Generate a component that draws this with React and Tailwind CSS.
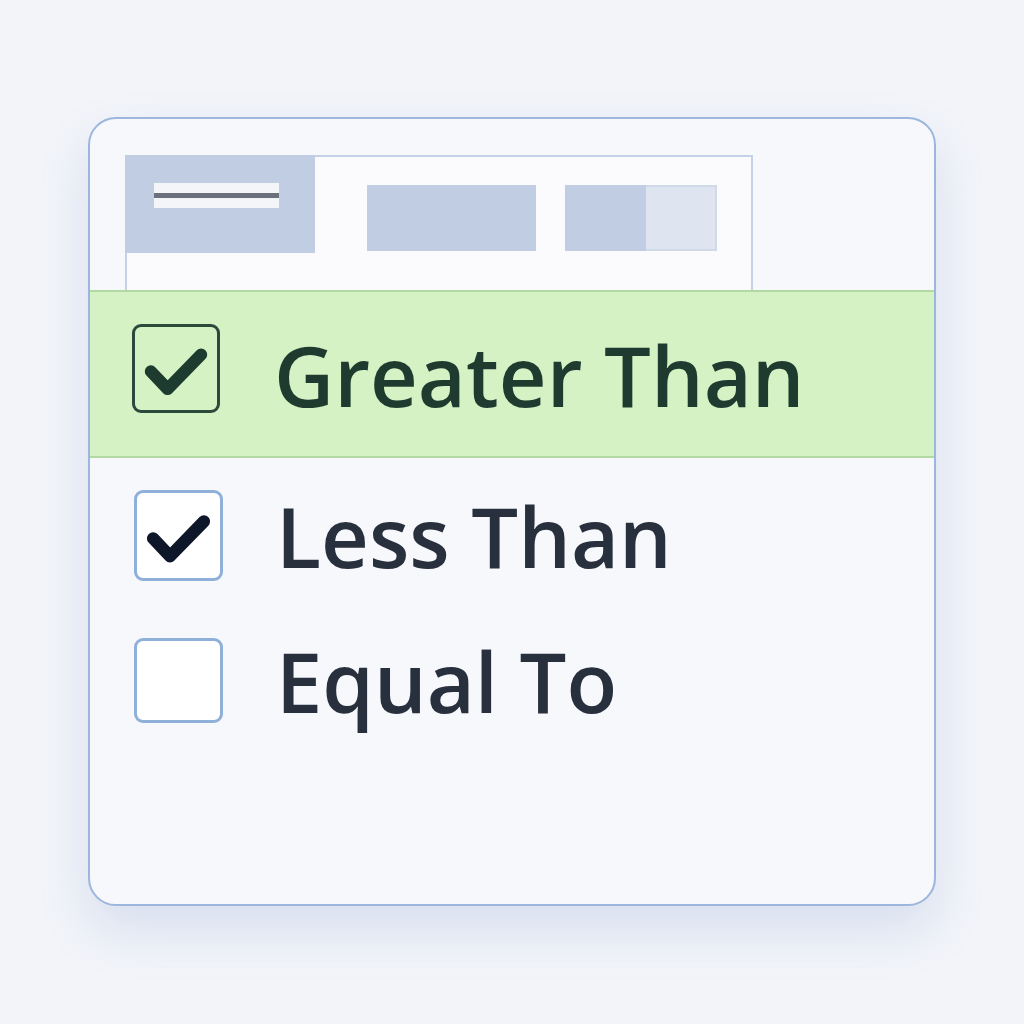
import React from 'react'

const FONT = { fontFamily: '"Open Sans", "Noto Sans", "DejaVu Sans", sans-serif' }

function Check({ color }) {
    return (
        <svg viewBox="0 0 88 88" className="absolute inset-0 h-full w-full">
            <path d="M17 47 L35 66 L71 29" fill="none" stroke={color} strokeWidth={13} strokeLinecap="round" strokeLinejoin="round" />
        </svg>
    )
}

function Row({ label, checked, boxClass, textClass, checkColor, rowClass }) {
    return (
        <div className={`flex items-center ${rowClass}`}>
            <div className={`relative shrink-0 ${boxClass}`}>
                {checked && <Check color={checkColor} />}
            </div>
            <span className={`font-semibold leading-none whitespace-nowrap ${textClass}`} style={FONT}>{label}</span>
        </div>
    )
}

export default function App() {
    return (
        <div className="w-[1024px] h-[1024px] bg-[#f2f4f9] pt-[117px] pl-[88px]">
            <div className="w-[848px] h-[789px] rounded-[28px] border-2 border-[#9db6dc] bg-[#f7f8fc] overflow-hidden shadow-[0_24px_50px_rgba(110,140,200,0.2)]">
                {/* toolbar */}
                <div className="h-[171px] pt-[36px] pl-[35px]">
                    <div className="w-[628px] h-[135px] border-2 border-b-0 border-[#c5d1e5] bg-[#fbfbfd] flex items-start">
                        <div className="-mt-[2px] -ml-[2px] w-[190px] h-[98px] bg-[#c1cde3] flex items-center justify-center pb-[18px] pr-[8px]">
                            <div className="w-[125px] h-[25px] bg-[#f4f5f9] flex items-center">
                                <div className="w-full h-[5px] bg-[#6a717c]" />
                            </div>
                        </div>
                        <div className="mt-[28px] ml-[52px] w-[169px] h-[66px] bg-[#c1cde3]" />
                        <div className="mt-[28px] ml-[29px] w-[152px] h-[66px] flex">
                            <div className="w-[81px] h-full bg-[#c1cde3]" />
                            <div className="flex-1 h-full bg-[#dfe5f0] border-2 border-l-0 border-[#d0d9e8]" />
                        </div>
                    </div>
                </div>

                {/* options */}
                <Row
                    label="Greater Than"
                    checked
                    rowClass="h-[168px] bg-[#d5f2c4] border-y-2 border-[#b3d9a3] pl-[42px]"
                    boxClass="w-[88px] h-[89px] rounded-[9px] border-[3px] border-[#2b4a3b] -mt-[12px]"
                    textClass="ml-[54px] text-[83px] text-[#1f3b30]"
                    checkColor="#1e3b2f"
                />
                <Row
                    label="Less Than"
                    checked
                    rowClass="h-[154px] pl-[44px]"
                    boxClass="w-[89px] h-[91px] rounded-[9px] border-[3px] border-[#8fb0d8] bg-white"
                    textClass="ml-[53px] text-[83px] text-[#28303d]"
                    checkColor="#0e1729"
                />
                <Row
                    label="Equal To"
                    rowClass="h-[136px] pl-[44px]"
                    boxClass="w-[89px] h-[85px] rounded-[9px] border-[3px] border-[#8fb0d8] bg-white"
                    textClass="ml-[53px] text-[83px] text-[#28303d]"
                />
            </div>
        </div>
    )
}
